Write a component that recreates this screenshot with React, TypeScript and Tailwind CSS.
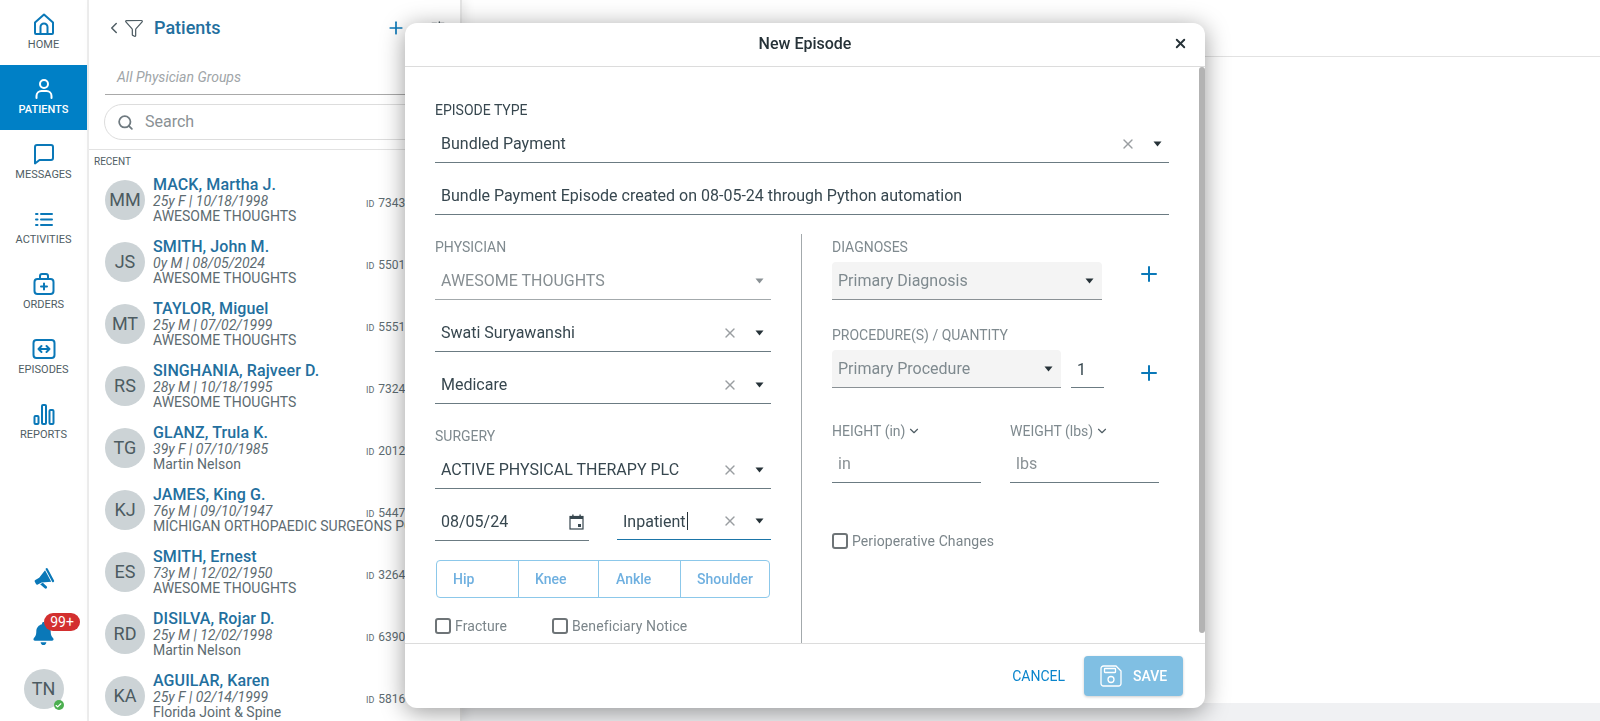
import React from 'react';
import { Check, ChevronDown, ChevronLeft, Funnel, Plus, Search, SlidersHorizontal, X } from 'lucide-react';
import { FaBell } from 'react-icons/fa';

const patients = [
  { initials: 'MM', name: 'MACK, Martha J.', info: '25y F | 10/18/1998', org: 'AWESOME THOUGHTS', id: '7343' },
  { initials: 'JS', name: 'SMITH, John M.', info: '0y M | 08/05/2024', org: 'AWESOME THOUGHTS', id: '5501' },
  { initials: 'MT', name: 'TAYLOR, Miguel', info: '25y M | 07/02/1999', org: 'AWESOME THOUGHTS', id: '5551' },
  { initials: 'RS', name: 'SINGHANIA, Rajveer D.', info: '28y M | 10/18/1995', org: 'AWESOME THOUGHTS', id: '7324' },
  { initials: 'TG', name: 'GLANZ, Trula K.', info: '39y F | 07/10/1985', org: 'Martin Nelson', id: '2012' },
  { initials: 'KJ', name: 'JAMES, King G.', info: '76y M | 09/10/1947', org: 'MICHIGAN ORTHOPAEDIC SURGEONS PC', id: '5447' },
  { initials: 'ES', name: 'SMITH, Ernest', info: '73y M | 12/02/1950', org: 'AWESOME THOUGHTS', id: '3264' },
  { initials: 'RD', name: 'DISILVA, Rojar D.', info: '25y M | 12/02/1998', org: 'Martin Nelson', id: '6390' },
  { initials: 'KA', name: 'AGUILAR, Karen', info: '25y F | 02/14/1999', org: 'Florida Joint & Spine', id: '5816' },
];

const iconProps = {
  width: 24,
  height: 24,
  viewBox: '0 0 24 24',
  fill: 'none',
  stroke: 'currentColor',
  strokeWidth: 2,
  strokeLinecap: 'round' as const,
  strokeLinejoin: 'round' as const,
};

const HomeIcon = () => (
  <svg {...iconProps}>
    <path d="M3 10.5 12 2.5l9 8V21a1 1 0 0 1-1 1H4a1 1 0 0 1-1-1z" />
    <path d="M8.5 22v-7a3.5 3.5 0 0 1 7 0v7" />
  </svg>
);

const PersonIcon = () => (
  <svg {...iconProps}>
    <circle cx="12" cy="7" r="4" />
    <path d="M4.5 21v-2a5 5 0 0 1 5-5h5a5 5 0 0 1 5 5v2" />
  </svg>
);

const MessageIcon = () => (
  <svg {...iconProps}>
    <path d="M3 5a2 2 0 0 1 2-2h14a2 2 0 0 1 2 2v11a2 2 0 0 1-2 2H7.5L3 21.5z" />
  </svg>
);

const ListIcon = () => (
  <svg {...iconProps}>
    <path d="M9 7h11M9 12.5h11M9 18h11" />
    <path d="M4 7h1.5M4 12.5h1.5M4 18h1.5" />
  </svg>
);

const BagIcon = () => (
  <svg {...iconProps}>
    <rect x="2.5" y="7" width="19" height="15" rx="3" />
    <path d="M8 7V4a2 2 0 0 1 2-2h4a2 2 0 0 1 2 2v3" />
    <path d="M12 11.5v6M9 14.5h6" />
  </svg>
);

const EpisodesIcon = () => (
  <svg {...iconProps}>
    <rect x="1.5" y="3" width="21" height="18" rx="3" />
    <path d="M6.5 12h11M9.5 9l-3 3 3 3M14.5 9l3 3-3 3" />
  </svg>
);

const BarsIcon = () => (
  <svg {...iconProps}>
    <rect x="2.5" y="14" width="4" height="8" rx="1" />
    <rect x="10" y="3" width="4" height="19" rx="1" />
    <rect x="17.5" y="8" width="4" height="14" rx="1" />
  </svg>
);

const MegaphoneIcon = () => (
  <svg width="21" height="21" viewBox="0 0 24 24" fill="currentColor" className="-rotate-[28deg] text-[#0a78b8]">
    <path d="M1.5 10.5A1.5 1.5 0 0 1 3 9h5l10-4.5v15L8 15H3a1.5 1.5 0 0 1-1.500-1.500z" />
    <rect x="19" y="3" width="2.5" height="18" rx="1.2" />
    <path d="M5.500 16h3.500l2 5.500a1.500 1.500 0 0 1-3 1z" />
  </svg>
);

const CalendarIcon = () => (
  <svg width="15" height="16" viewBox="0 0 15 16" className="text-[#37474f]">
    <rect x="1" y="2.5" width="13" height="12.5" fill="none" stroke="currentColor" strokeWidth="1.2" />
    <rect x="1" y="2.5" width="13" height="2.5" fill="currentColor" />
    <rect x="3.2" y="0.5" width="1.4" height="3" fill="currentColor" />
    <rect x="10.4" y="0.5" width="1.4" height="3" fill="currentColor" />
    <rect x="9" y="10" width="3" height="3" fill="currentColor" />
  </svg>
);

const SaveIcon = () => (
  <svg width="22" height="22" viewBox="0 0 22 22" fill="none" stroke="currentColor" strokeWidth="1.3">
    <path d="M3.5 1H16l5 5v12.5a2.5 2.5 0 0 1-2.5 2.5h-15A2.5 2.5 0 0 1 1 18.5v-15A2.5 2.5 0 0 1 3.5 1z" />
    <rect x="4.5" y="3.5" width="11" height="4" rx="0.5" />
    <circle cx="11" cy="14.5" r="3" />
  </svg>
);

const navItems = [
  { label: 'HOME', icon: <HomeIcon /> },
  { label: 'PATIENTS', icon: <PersonIcon />, active: true },
  { label: 'MESSAGES', icon: <MessageIcon /> },
  { label: 'ACTIVITIES', icon: <ListIcon /> },
  { label: 'ORDERS', icon: <BagIcon /> },
  { label: 'EPISODES', icon: <EpisodesIcon /> },
  { label: 'REPORTS', icon: <BarsIcon /> },
];

const Caret: React.FC<{ muted?: boolean }> = ({ muted = false }) => (
  <svg width="9" height="6" viewBox="0 0 9 6" className={`shrink-0 ${muted ? 'text-[#8a9195]' : 'text-[#263238]'}`}>
    <path d="M0.5 0.5h8L4.5 5.5z" fill="currentColor" />
  </svg>
);

interface SelectFieldProps {
  value: string;
  muted?: boolean;
  clearable?: boolean;
  focused?: boolean;
  className?: string;
}

const SelectField: React.FC<SelectFieldProps> = ({ value, muted = false, clearable = true, focused = false, className = '' }) => (
  <div
    className={`flex h-10 items-center pl-[6px] pr-[7px] pt-[2px] border-b ${focused ? 'border-[#1b75a8]' : 'border-[#6b7b82]'} ${className}`}
  >
    <span className={`flex-1 truncate text-base ${muted ? 'text-[#868e92]' : 'text-[#37474f]'}`}>
      {value}
      {focused && <span className="ml-px inline-block h-[18px] w-px translate-y-[3px] bg-[#263238]" />}
    </span>
    {clearable && <X className="mr-[17px] h-4 w-4 text-[#9a9ea1]" strokeWidth={2} />}
    <Caret muted={muted} />
  </div>
);

const GraySelect: React.FC<{ value: string; className?: string }> = ({ value, className = '' }) => (
  <div className={`flex h-[38px] items-center rounded-t-[4px] border-b border-[#8a9195] bg-[#f4f4f4] pl-[6px] pr-[8px] ${className}`}>
    <span className="flex-1 text-base text-[#7f8a8f]">{value}</span>
    <Caret />
  </div>
);

const Checkbox: React.FC<{ label: string; className?: string }> = ({ label, className = '' }) => (
  <div className={`flex h-5 items-center ${className}`}>
    <span className="h-4 w-4 rounded-[3px] border-2 border-[#6e7477] bg-white" />
    <span className="ml-1 text-sm tracking-[0.1px] text-[#7b858a]">{label}</span>
  </div>
);

const FieldLabel: React.FC<{ children: React.ReactNode; dark?: boolean }> = ({ children, dark = false }) => (
  <div className={`h-5 text-sm leading-5 ${dark ? 'text-[#37474f]' : 'text-[#7f8a8f]'}`}>{children}</div>
);

const Sidebar = () => (
  <aside className="flex h-full w-[89px] shrink-0 flex-col justify-between border-r-2 border-[#eeeeee] bg-white">
    <nav>
      {navItems.map((item) => (
        <div
          key={item.label}
          className={`flex h-[65px] flex-col items-center justify-center ${item.active ? 'bg-[#0080c6] text-white' : 'text-[#0a78b8]'}`}
        >
          <div className="mt-[-2px] h-6">{item.icon}</div>
          <span className={`mt-[2px] text-[11px] leading-[14px] ${item.active ? 'font-medium text-white' : 'text-[#4f5d64]'}`}>
            {item.label}
          </span>
        </div>
      ))}
    </nav>
    <div className="flex flex-col items-center pb-3">
      <MegaphoneIcon />
      <div className="relative mt-[33px] h-[26px]">
        <FaBell className="h-[23px] w-[21px] text-[#0a78b8]" />
        <span className="absolute left-[11px] top-[-9px] flex h-[18px] w-9 items-center justify-center rounded-full bg-[#d32f2f] text-sm leading-none text-white">
          99+
        </span>
      </div>
      <div className="relative mt-[21px] flex h-10 w-10 items-center justify-center rounded-full bg-[#ccd3d6] text-lg text-[#4c5b61]">
        TN
        <span className="absolute bottom-[-1px] right-0 flex h-[10px] w-[10px] items-center justify-center rounded-full bg-[#4caf50] text-white">
          <Check className="h-[7px] w-[7px]" strokeWidth={4} />
        </span>
      </div>
    </div>
  </aside>
);

const PatientRow: React.FC<{ patient: (typeof patients)[number] }> = ({ patient }) => (
  <div className="flex h-[62px] items-center pl-4">
    <div className="flex h-10 w-10 shrink-0 items-center justify-center rounded-full bg-[#ccd3d6] text-lg text-[#4c5b61]">
      {patient.initials}
    </div>
    <div className="ml-2 mt-[-1px] w-[213px] shrink-0 whitespace-nowrap">
      <div className="text-base font-medium leading-[18px] tracking-[0.1px] text-[#236f9e]">{patient.name}</div>
      <div className="text-sm italic leading-[15px] text-[#5d6b71]">{patient.info}</div>
      <div className="text-sm leading-[15px] text-[#5d6b71]">{patient.org}</div>
    </div>
    <div className="mt-[4px] whitespace-nowrap text-[#5d6b71]">
      <span className="mr-1 text-[9px]">ID</span>
      <span className="text-xs">{patient.id}</span>
    </div>
  </div>
);

const PatientPanel = () => (
  <section className="relative h-full w-[373px] shrink-0 overflow-hidden border-r-2 border-[#e4e4e4] bg-white shadow-[4px_0_10px_rgba(0,0,0,0.08)]">
    <header className="flex h-[56px] items-center pl-4 pr-[14px]">
      <ChevronLeft className="h-[18px] w-[18px] text-[#4f5d64]" strokeWidth={2} />
      <Funnel className="ml-[1px] h-5 w-5 text-[#4f5d64]" strokeWidth={1.5} />
      <h1 className="ml-[10px] flex-1 text-lg font-medium text-[#236f9e]">Patients</h1>
      <Plus className="mr-[24px] h-5 w-5 text-[#0a78b8]" strokeWidth={2} />
      <SlidersHorizontal className="h-4 w-4 text-[#4f5d64]" />
    </header>
    <div className="mx-4 h-[39px] border-b border-[#a9a9a9] pl-3 pt-[9px]">
      <span className="text-sm italic text-[#a0a5a8]">All Physician Groups</span>
    </div>
    <div className="ml-[15px] mr-3 mt-[9px] flex h-[36px] items-center rounded-full border border-[#dddddd] pl-3">
      <Search className="h-[17px] w-[17px] text-[#6f7a80]" strokeWidth={2.5} />
      <span className="ml-[11px] text-base text-[#8a9195]">Search</span>
    </div>
    <div className="mt-[9px] border-t border-[#e2e2e2] pl-[5px] pt-[6px] text-[10px] leading-[12px] text-[#4f5d64]">RECENT</div>
    <div className="mt-[1px]">
      {patients.map((patient) => (
        <PatientRow key={patient.initials} patient={patient} />
      ))}
    </div>
  </section>
);

const NewEpisodeModal = () => (
  <div className="fixed left-[405px] top-[23px] flex h-[685px] w-[800px] flex-col rounded-[12px] bg-white shadow-[0_4px_24px_rgba(0,0,0,0.4)]">
    <div className="relative flex h-[44px] shrink-0 items-center justify-center border-b border-[#dcdcdc] pb-[2px]">
      <h2 className="text-base font-medium text-[#263238]">New Episode</h2>
      <X className="absolute right-[17px] top-[13px] h-[15px] w-[15px] text-[#263238]" strokeWidth={3} />
    </div>
    <div className="flex min-h-0 flex-1">
      <div className="min-w-0 flex-1 pl-[30px] pr-[30px] pt-[33px]">
        <FieldLabel dark>EPISODE TYPE</FieldLabel>
        <SelectField value="Bundled Payment" className="mt-[3px] w-[734px]" />
        <div className="mt-3 flex h-10 w-[734px] items-center border-b border-[#6b7b82] pl-[6px] pt-[2px] text-base text-[#37474f]">
          Bundle Payment Episode created on 08-05-24 through Python automation
        </div>
        <div className="mt-[19px] flex h-[409px]">
          <div className="w-[366px] shrink-0 pr-[30px] pt-[3px]">
            <FieldLabel>PHYSICIAN</FieldLabel>
            <SelectField value="AWESOME THOUGHTS" muted clearable={false} className="mt-[3px] border-[#a3a9ac]" />
            <SelectField value="Swati Suryawanshi" className="mt-3" />
            <SelectField value="Medicare" className="mt-3" />
            <div className="mt-[22px]">
              <FieldLabel>SURGERY</FieldLabel>
            </div>
            <SelectField value="ACTIVE PHYSICAL THERAPY PLC" className="mt-[3px]" />
            <div className="mt-3 flex items-start gap-[28px]">
              <div className="flex h-10 w-[154px] items-center justify-between border-b border-[#6b7b82] pl-[6px] pr-[5px] pt-[2px] text-base text-[#37474f]">
                08/05/24
                <CalendarIcon />
              </div>
              <SelectField value="Inpatient" focused className="h-[39px] flex-1" />
            </div>
            <div className="mx-px mt-[19px] grid h-[38px] grid-cols-[81px_80px_82px_1fr] rounded-[4px] border border-[#8cc8ea] text-sm font-medium text-[#6fb0e0]">
              <div className="flex items-center pl-4">Hip</div>
              <div className="flex items-center border-l border-[#8cc8ea] pl-4">Knee</div>
              <div className="flex items-center border-l border-[#8cc8ea] pl-[17px]">Ankle</div>
              <div className="flex items-center border-l border-[#8cc8ea] pl-4">Shoulder</div>
            </div>
            <div className="mt-[18px] flex">
              <Checkbox label="Fracture" className="w-[117px]" />
              <Checkbox label="Beneficiary Notice" />
            </div>
          </div>
          <div className="flex-1 border-l border-[#a3a9ac] pl-[30px] pt-[3px]">
            <FieldLabel>DIAGNOSES</FieldLabel>
            <div className="mt-[5px] flex items-center">
              <GraySelect value="Primary Diagnosis" className="w-[270px]" />
              <Plus className="ml-[35px] mt-[-14px] h-6 w-6 text-[#0a78b8]" strokeWidth={2} />
            </div>
            <div className="mt-[25px]">
              <FieldLabel>PROCEDURE(S) / QUANTITY</FieldLabel>
            </div>
            <div className="mt-[5px] flex items-center">
              <GraySelect value="Primary Procedure" className="w-[229px]" />
              <div className="ml-[10px] flex h-[38px] w-[33px] items-center border-b border-[#6b7b82] pl-[6px] pt-[2px] text-base text-[#37474f]">1</div>
              <Plus className="ml-[33px] mt-[7px] h-6 w-6 text-[#0a78b8]" strokeWidth={2} />
            </div>
            <div className="mt-[33px] flex gap-[29px]">
              <div className="w-[149px]">
                <div className="flex h-5 items-center text-sm text-[#7f8a8f]">
                  HEIGHT (in)
                  <ChevronDown className="ml-[2px] h-[14px] w-[14px] text-[#4f5d64]" />
                </div>
                <div className="mt-[2px] flex h-10 items-center border-b border-[#6b7b82] pl-[6px] pt-[2px] text-base text-[#8a9195]">in</div>
              </div>
              <div className="w-[149px]">
                <div className="flex h-5 items-center text-sm text-[#7f8a8f]">
                  WEIGHT (lbs)
                  <ChevronDown className="ml-[2px] h-[14px] w-[14px] text-[#4f5d64]" />
                </div>
                <div className="mt-[2px] flex h-10 items-center border-b border-[#6b7b82] pl-[6px] pt-[2px] text-base text-[#8a9195]">lbs</div>
              </div>
            </div>
            <Checkbox label="Perioperative Changes" className="mt-[48px]" />
          </div>
        </div>
      </div>
      <div className="w-[6px] shrink-0 pb-[10px]">
        <div className="h-full rounded-[3px] bg-[#b3b3b3]" />
      </div>
    </div>
    <div className="flex h-[65px] shrink-0 items-center justify-end border-t border-[#dcdcdc] pr-[22px]">
      <span className="text-sm text-[#0a85cc]">CANCEL</span>
      <button className="ml-[19px] flex h-10 w-[99px] items-center rounded-[4px] bg-[#80bfe3] pl-4 text-sm font-medium text-white shadow-[0_1px_3px_rgba(0,0,0,0.2)]">
        <SaveIcon />
        <span className="ml-[11px]">SAVE</span>
      </button>
    </div>
  </div>
);

export default function App() {
  return (
    <div className="flex h-screen w-full overflow-hidden bg-white font-['Roboto',sans-serif]">
      <Sidebar />
      <PatientPanel />
      <main className="flex flex-1 flex-col">
        <div className="h-[57px] border-b border-[#e2e2e2]" />
        <div className="flex-1" />
        <div className="h-[18px] bg-[#f0f1f3]" />
      </main>
      <NewEpisodeModal />
    </div>
  );
}
